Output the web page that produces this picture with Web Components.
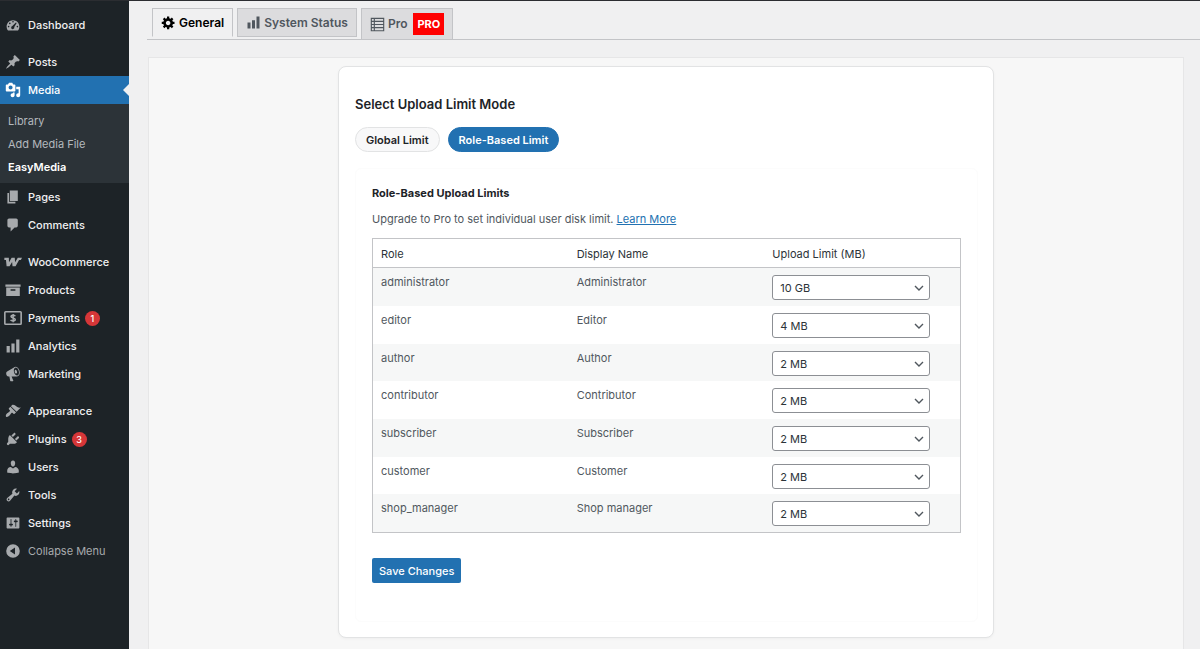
<!DOCTYPE html>
<html lang="en">
<head>
<meta charset="utf-8">
<meta name="viewport" content="width=device-width, initial-scale=1">
<title>EasyMedia Settings</title>
<style>
  html, body { margin: 0; min-height: 100%; }
  body { background: #f0f0f1; color: #1d2327; font: 400 11px/14px Inter, "Liberation Sans", sans-serif; }
</style>
</head>
<body>
<admin-shell>
  <admin-menu slot="menu">
    <menu-item icon="dashboard">Dashboard</menu-item>
    <menu-item icon="post" gap>Posts</menu-item>
    <menu-item icon="media" current>Media</menu-item>
    <menu-sub>
      <sub-link>Library</sub-link>
      <sub-link>Add Media File</sub-link>
      <sub-link current>EasyMedia</sub-link>
    </menu-sub>
    <menu-item icon="page">Pages</menu-item>
    <menu-item icon="comments">Comments</menu-item>
    <menu-item icon="woo" gap>WooCommerce</menu-item>
    <menu-item icon="archive">Products</menu-item>
    <menu-item icon="payments" count="1">Payments</menu-item>
    <menu-item icon="chart">Analytics</menu-item>
    <menu-item icon="megaphone">Marketing</menu-item>
    <menu-item icon="appearance" gap>Appearance</menu-item>
    <menu-item icon="plugins" count="3">Plugins</menu-item>
    <menu-item icon="users">Users</menu-item>
    <menu-item icon="tools">Tools</menu-item>
    <menu-item icon="settings">Settings</menu-item>
    <menu-item icon="collapse" muted>Collapse Menu</menu-item>
  </admin-menu>
  <tab-bar slot="tabs">
    <tab-link icon="gear" active>General</tab-link>
    <tab-link icon="chart">System Status</tab-link>
    <tab-link icon="table" badge="PRO">Pro</tab-link>
  </tab-bar>
  <settings-card>
    <mode-switch slot="mode"></mode-switch>
    <role-limits></role-limits>
  </settings-card>
</admin-shell>

<script>
const ICONS = {
  dashboard: '<path fill-rule="evenodd" d="M3.76 17h12.48c1.1-1.37 1.76-3.11 1.76-5 0-4.42-3.58-8-8-8s-8 3.58-8 8c0 1.89.66 3.63 1.76 5zM9 6a1 1 0 1 0 2 0a1 1 0 1 0-2 0zM5 8a1 1 0 1 0 2 0a1 1 0 1 0-2 0zM3.500 12a1 1 0 1 0 2 0a1 1 0 1 0-2 0zM14.500 12a1 1 0 1 0 2 0a1 1 0 1 0-2 0zM14.600 7.400L11.600 12.500A2 2 0 1 1 9.200 11.200L13.600 7z"/>',
  post: '<path d="M10.44 3.02l1.82-1.82 6.36 6.35-1.83 1.82c-1.05-.68-2.48-.57-3.41.36l-.75.75c-.92.93-1.04 2.35-.35 3.41l-1.83 1.82-2.41-2.41-2.8 2.79c-.42.42-3.38 2.71-3.8 2.29s1.86-3.39 2.28-3.81l2.79-2.79L4.1 9.36l1.83-1.82c1.05.69 2.48.57 3.4-.36l.75-.75c.93-.92 1.05-2.35.36-3.41z"/>',
  media: '<path fill-rule="evenodd" d="M13 11V4c0-.55-.45-1-1-1h-1.67L9 1H5L3.67 3H2c-.55 0-1 .45-1 1v7c0 .55.45 1 1 1h10c.55 0 1-.45 1-1zM7 4.5c1.38 0 2.5 1.12 2.5 2.5S8.38 9.5 7 9.5 4.5 8.38 4.5 7 5.62 4.5 7 4.5zM14 6h5v10.5c0 1.38-1.12 2.5-2.5 2.5S14 17.88 14 16.5s1.12-2.5 2.5-2.5c.17 0 .34.02.5.05V9h-3V6zm-4 8.05V13h2v3.5c0 1.38-1.12 2.5-2.5 2.5S7 17.88 7 16.5 8.12 14 9.5 14c.17 0 .34.02.5.05z"/>',
  page: '<path d="M6 15V2h10v13H6zm-1 1h8v2H3V5h2v11z"/>',
  comments: '<path d="M5 2h9c1.1 0 2 .9 2 2v7c0 1.1-.9 2-2 2h-2l-5 5v-5H5c-1.1 0-2-.9-2-2V4c0-1.1.9-2 2-2z"/>',
  woo: '<path d="M-.8 4.800H4.800L5 10.200 8.300 4.800h3.900L12.600 10.200 16 4.800h5.300L19.800 7.600h-2.200L13.200 15.200H9.400L8.900 10 5.700 15.200H2L1.200 7.600H-.8z"/>',
  archive: '<path fill-rule="evenodd" d="M19.500 3v3H.5V3h19zM1.500 7h17v10.500h-17V7zM13 11V9H7v2h6z"/>',
  payments: '<rect x="-.2" y="2.200" width="20.400" height="15.600" rx="1" fill="none" stroke="currentColor" stroke-width="2"/><path d="M12.800 7.800C12 6 7.500 6 7.500 8.200S12.800 9.800 12.800 12 8 14 7 12.300M10.200 5v10.200" fill="none" stroke="currentColor" stroke-width="1.900"/>',
  chart: '<path d="M18 18V2h-4v16h4zm-6 0V7H8v11h4zm-6 0v-8H2v8h4z"/>',
  megaphone: '<path fill-rule="evenodd" d="M18.15 5.94c.46 1.62.38 3.22-.02 4.48-.42 1.28-1.26 2.18-2.3 2.48-.16.06-.26.06-.4.06-.06.02-.12.02-.18.02-.06.02-.14.02-.22.02h-6.8l2.22 5.5c.02.14-.06.26-.14.34-.08.1-.24.16-.34.16H6.95c-.1 0-.26-.06-.34-.16-.08-.08-.16-.2-.14-.34l-1-5.5H4.25l-.02-.02c-.5.06-1.08-.18-1.54-.62s-.88-1.08-1.06-1.88c-.24-.8-.2-1.56-.02-2.2.18-.62.58-1.08 1.06-1.3l.02-.02 9-5.4c.1-.06.18-.1.24-.16.06-.04.14-.08.24-.12.16-.08.28-.12.5-.18 1.04-.3 2.24.1 3.22.98s1.84 2.24 2.26 3.86zm-2.58 5.98h-.02c.4-.1.74-.34 1.04-.7.58-.7.86-1.76.86-3.04 0-.64-.1-1.3-.28-1.98-.34-1.36-1.02-2.5-1.78-3.24s-1.68-1.1-2.46-.88c-.82.22-1.4.96-1.7 2-.32 1.04-.28 2.36.06 3.72.38 1.36 1 2.5 1.8 3.24.78.74 1.62 1.1 2.48.88zm-2.54-7.08c.22-.04.42-.02.62.04.38.16.76.48 1.02 1s.42 1.2.42 1.78c0 .3-.04.56-.12.8-.18.48-.44.84-.86.94-.34.1-.8-.06-1.14-.4s-.64-.86-.78-1.5c-.18-.62-.12-1.24.02-1.72s.48-.84.82-.94z"/>',
  appearance: '<path d="M14.48 11.06L7.41 3.99l1.5-1.5c.5-.56 2.3-.47 3.51.32 1.21.8 1.43 1.28 2.91 2.1 1.18.64 2.45 1.26 4.45.85zm-.71.71L6.7 4.7 4.93 6.47c-.39.39-.39 1.02 0 1.41l1.06 1.06c.39.39.39 1.03 0 1.42-.6.6-1.43 1.11-2.21 1.69-.35.26-.7.53-1.01.84C1.43 14.23.4 16.08 1.4 17.07c.99 1 2.84-.03 4.18-1.36.31-.31.58-.66.85-1.02.57-.78 1.08-1.61 1.69-2.21.39-.39 1.02-.39 1.41 0l1.06 1.06c.39.39 1.02.39 1.41 0z"/>',
  plugins: '<path d="M13.11 4.36L9.87 7.6 8 5.73l3.24-3.24c.35-.34 1.05-.2 1.56.32.52.51.66 1.21.31 1.55zm-8 1.77l.91-1.12 9.01 9.01-1.19.84c-.71.71-2.63 1.16-3.82 1.16H6.14L4.9 17.26c-.59.59-1.54.59-2.12 0-.59-.58-.59-1.53 0-2.12l1.24-1.24v-3.88c0-1.13.4-3.19 1.09-3.89zm7.26 3.97l3.24-3.24c.34-.35 1.04-.21 1.55.31.52.51.66 1.21.31 1.55l-3.24 3.25z"/>',
  users: '<path d="M10 9.25c-2.27 0-2.73-3.44-2.73-3.44C7 4.02 7.82 2 9.97 2c2.16 0 2.98 2.02 2.71 3.81 0 0-.41 3.44-2.68 3.44zm0 2.57L12.72 10c2.39 0 4.52 2.33 4.52 4.53v2.49s-3.65 1.13-7.24 1.13c-3.65 0-7.24-1.13-7.24-1.13v-2.49c0-2.25 1.94-4.48 4.47-4.48z"/>',
  tools: '<path fill-rule="evenodd" d="M16.68 9.77c-1.34 1.34-3.3 1.67-4.95.99l-5.41 6.52c-.99.99-2.59.99-3.58 0s-.99-2.59 0-3.57l6.52-5.42c-.68-1.65-.35-3.61.99-4.95 1.28-1.28 3.12-1.62 4.72-1.06l-2.89 2.89 2.82 2.82 2.86-2.87c.53 1.58.18 3.39-1.08 4.65zM3.81 16.21c.4.39 1.04.39 1.43 0 .4-.4.4-1.04 0-1.43-.39-.4-1.03-.4-1.43 0-.39.39-.39 1.03 0 1.43z"/>',
  settings: '<path fill-rule="evenodd" d="M18 16V4c0-.55-.45-1-1-1H3c-.55 0-1 .45-1 1v12c0 .55.45 1 1 1h14c.55 0 1-.45 1-1zM8 11h1c.55 0 1 .45 1 1s-.45 1-1 1H8v1.500c0 .28-.22.5-.5.5s-.5-.22-.5-.5V13H6c-.55 0-1-.45-1-1s.45-1 1-1h1V5.500c0-.28.22-.5.5-.5s.5.22.5.5V11zm5-2h-1c-.55 0-1-.45-1-1s.45-1 1-1h1V5.500c0-.28.22-.5.5-.5s.5.22.5.5V7h1c.55 0 1 .45 1 1s-.45 1-1 1h-1v5.500c0 .28-.22.5-.5.5s-.5-.22-.5-.5V9z"/>',
  collapse: '<path fill-rule="evenodd" d="M10 1.500a8.500 8.500 0 1 0 0 17a8.500 8.500 0 1 0 0-17zM12.500 5.500v9L6 10z"/>',
  gear: '<path fill-rule="evenodd" d="M18 12h-2.18c-.17.7-.44 1.35-.81 1.93l1.54 1.54-2.1 2.1-1.54-1.54c-.58.36-1.23.63-1.91.79V19H8v-2.18c-.68-.16-1.33-.43-1.91-.79l-1.54 1.54-2.12-2.12 1.54-1.54c-.36-.58-.63-1.23-.79-1.91H1V9.030h2.17c.16-.7.44-1.35.8-1.94L2.43 5.55l2.1-2.1 1.54 1.54c.58-.37 1.24-.64 1.93-.81V2h3v2.18c.68.16 1.33.43 1.91.79l1.54-1.54 2.12 2.12-1.54 1.54c.36.59.64 1.24.8 1.94H18V12zm-8.5 1.5c1.66 0 3-1.34 3-3s-1.34-3-3-3-3 1.34-3 3 1.34 3 3 3z"/>',
  table: '<path fill-rule="evenodd" d="M1 1h18v18H1zM2.500 2.500V5H5V2.500zM6.500 2.500V5h11V2.500zM2.500 6.700v2.500H5V6.700zM6.500 6.700v2.500h11V6.700zM2.500 10.800v2.500H5v-2.500zM6.500 10.800v2.500h11v-2.500zM2.500 15v2.500H5V15zM6.500 15v2.500h11V15z"/>'
};

/* Defines an element whose shadow root is rendered once from a template string. */
function define(name, render) {
  customElements.define(name, class extends HTMLElement {
    connectedCallback() {
      if (this.shadowRoot) return;
      const t = document.createElement('template');
      t.innerHTML = render(this);
      this.attachShadow({ mode: 'open' }).append(t.content);
    }
  });
}

define('ui-icon', el => `
  <style>:host{display:block;width:var(--icon,16px);height:var(--icon,16px);flex:none}svg{display:block;width:100%;height:100%;overflow:visible}</style>
  <svg viewBox="0 0 20 20" fill="currentColor" aria-hidden="true">${ICONS[el.getAttribute('name')]}</svg>`);

define('admin-shell', () => `
  <style>
    :host{display:grid;grid-template-columns:129px minmax(0,1fr);min-height:100vh;box-sizing:border-box;border-top:1px solid #2b2d31}
    main{padding:7px 0 0 18px;display:flex;flex-direction:column}
    section{flex:1;margin:17px 16px 0 1px;background:#f7f7f7;border:1px solid #e6e6e7;border-bottom:0;padding:8px 16px 12px}
    slot[name=tabs]{display:block}
  </style>
  <slot name="menu"></slot>
  <main><slot name="tabs"></slot><section><slot></slot></section></main>`);

define('admin-menu', () => `
  <style>:host{display:block;background:#1d2327;padding-top:10px}nav{display:flex;flex-direction:column}</style>
  <nav aria-label="Main menu"><slot></slot></nav>`);

define('menu-item', el => `
  <style>
    :host{display:block}
    :host([gap]){margin-top:9px}
    a{position:relative;display:flex;align-items:center;height:28px;padding-left:5px;gap:7px;color:#f0f0f1;font-weight:500;text-decoration:none}
    ui-icon{color:#a7aaad}
    :host([current]) a{background:#2271b1;color:#fff}
    :host([current]) ui-icon{color:#fff}
    :host([current]) a::after{content:"";position:absolute;right:0;top:8px;border:6px solid transparent;border-left:0;border-right-color:#f0f0f1}
    :host([muted]) a{color:#a7aaad;font-weight:400}
    b{min-width:15px;height:15px;margin-left:-2px;border-radius:8px;background:#d63638;color:#fff;font:500 9px/15px Inter,sans-serif;text-align:center}
  </style>
  <a href="#"><ui-icon name="${el.getAttribute('icon')}"></ui-icon><span><slot></slot></span>${el.hasAttribute('count') ? `<b>${el.getAttribute('count')}</b>` : ''}</a>`);

define('menu-sub', () => `
  <style>:host{display:block;background:#2c3338;padding:6px 0 4px}</style><slot></slot>`);

define('sub-link', () => `
  <style>
    :host{display:block}
    a{display:block;padding-left:8px;line-height:23px;color:#b4b9be;text-decoration:none}
    :host([current]) a{color:#fff;font-weight:600}
  </style><a href="#"><slot></slot></a>`);

define('tab-bar', () => `
  <style>:host{display:block;border-bottom:1px solid #c3c4c7}nav{display:flex;align-items:flex-start;gap:4px;min-height:31px;padding-left:5px}</style>
  <nav aria-label="Settings sections"><slot></slot></nav>`);

define('tab-link', el => `
  <style>
    :host{display:block}
    a{box-sizing:border-box;min-height:29px;display:flex;align-items:center;gap:3px;padding:0 8px;border:1px solid #c3c4c7;background:#dcdcde;color:#50575e;font-size:12px;font-weight:600;text-decoration:none;--icon:15px}
    :host([badge]) a{min-height:31px;border-bottom:0}
    :host([active]) a{background:#f0f0f1;border-bottom-color:#f0f0f1;color:#000}
    b{margin-left:3px;padding:4px;background:#f00;color:#fff;font-size:11px;line-height:14px;font-weight:700}
  </style>
  <a href="#"><ui-icon name="${el.getAttribute('icon')}"></ui-icon><span><slot></slot></span>${el.hasAttribute('badge') ? `<b>${el.getAttribute('badge')}</b>` : ''}</a>`);

define('settings-card', () => `
  <style>
    :host{display:block;box-sizing:border-box;max-width:656px;margin:0 auto;background:#fff;border:1px solid #e2e3e4;border-radius:8px;box-shadow:0 1px 3px #0000000a;padding:28px 15px 15px 16px}
    div{margin-top:16px;padding:16px;border:1px solid #fcfcfc;border-radius:6px;padding-bottom:38px}
  </style>
  <slot name="mode"></slot><div><slot></slot></div>`);

define('mode-switch', () => `
  <style>
    :host{display:block}
    h2{margin:0;font-size:13px;line-height:18px;font-weight:600}
    p{margin:14px 0 0;display:flex;gap:8px}
    button{height:25px;padding:0 10px;border:1px solid #e2e3e4;border-radius:13px;background:#f8f8f9;color:#1d2327;font:600 11px/14px Inter,sans-serif}
    button[aria-pressed=true]{background:#2271b1;border-color:#2271b1;color:#fff}
  </style>
  <h2>Select Upload Limit Mode</h2>
  <p><button type="button" aria-pressed="false">Global Limit</button><button type="button" aria-pressed="true">Role-Based Limit</button></p>`);

define('limit-select', el => `
  <style>
    :host{display:grid;width:158px;max-width:100%}
    select,svg{grid-area:1/1}
    select{appearance:none;box-sizing:border-box;width:100%;height:25px;margin:0;padding:0 20px 0 7px;border:1px solid #8c8f94;border-radius:3px;background:#fff;color:#2c3338;font:400 11px/14px Inter,sans-serif}
    svg{width:10px;height:6px;place-self:center end;margin-right:6px;pointer-events:none}
  </style>
  <select aria-label="Upload limit for ${el.getAttribute('role-name')}">
    ${['2 MB', '4 MB', '10 GB'].map(v => `<option${v === el.getAttribute('value') ? ' selected' : ''}>${v}</option>`).join('')}
  </select>
  <svg viewBox="0 0 10 6" fill="none" stroke="#50575e" stroke-width="1.400" aria-hidden="true"><path d="M1 1l4 4 4-4"/></svg>`);

const ROLES = [
  ['administrator', 'Administrator', '10 GB'],
  ['editor', 'Editor', '4 MB'],
  ['author', 'Author', '2 MB'],
  ['contributor', 'Contributor', '2 MB'],
  ['subscriber', 'Subscriber', '2 MB'],
  ['customer', 'Customer', '2 MB'],
  ['shop_manager', 'Shop manager', '2 MB']
];

define('role-limits', () => `
  <style>
    :host{display:block}
    h3{margin:0;font-size:11px;line-height:16px;font-weight:700}
    p{margin:11px 0 12px;color:#50575e}
    a{color:#2271b1}
    table{width:100%;table-layout:fixed;border-collapse:separate;border-spacing:0;border:1px solid #c3c4c7}
    th{height:28px;padding:1px 8px 0;box-sizing:border-box;border-bottom:1px solid #c3c4c7;text-align:left;font-weight:400;color:#2c3338}
    thead th{height:29px}
    td{box-sizing:border-box;height:38px;padding:7px 8px 5px;vertical-align:top;color:#50575e}
    tr:nth-child(3n) td{height:37px}
    tbody tr:nth-child(odd){background:#f6f7f7}
    button{height:25px;margin-top:25px;padding:0 7px;border:0;border-radius:2px;background:#2271b1;color:#fff;font:500 11px/14px Inter,sans-serif}
  </style>
  <h3>Role-Based Upload Limits</h3>
  <p>Upgrade to Pro to set individual user disk limit. <a href="#">Learn More</a></p>
  <table>
    <thead><tr><th scope="col">Role</th><th scope="col">Display Name</th><th scope="col">Upload Limit (MB)</th></tr></thead>
    <tbody>${ROLES.map(([id, name, limit]) => `<tr><td>${id}</td><td>${name}</td><td><limit-select role-name="${name}" value="${limit}"></limit-select></td></tr>`).join('')}</tbody>
  </table>
  <button type="button">Save Changes</button>`);
</script>
</body>
</html>
